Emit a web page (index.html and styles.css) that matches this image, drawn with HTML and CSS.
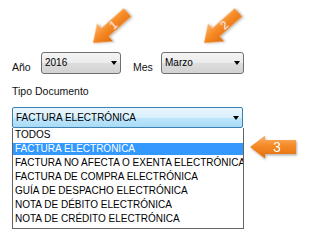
FILE: index.html
```html
<!DOCTYPE html>
<html lang="es">
<head>
<meta charset="utf-8">
<link rel="stylesheet" href="styles.css">
</head>
<body>
<div class="form">
  <div class="row">
    <span class="label label-ano">Año</span>
    <div class="combo combo-year"><span class="value">2016</span><span class="caret"></span></div>
    <span class="label label-mes">Mes</span>
    <div class="combo combo-month"><span class="value">Marzo</span><span class="caret"></span></div>
  </div>
  <div class="label label-tipo">Tipo Documento</div>
  <div class="combo combo-doc"><span class="value">FACTURA ELECTRÓNICA</span><span class="caret"></span></div>
  <ul class="list">
    <li>TODOS</li>
    <li class="selected">FACTURA ELECTRÓNICA</li>
    <li>FACTURA NO AFECTA O EXENTA ELECTRÓNICA</li>
    <li>FACTURA DE COMPRA ELECTRÓNICA</li>
    <li>GUÍA DE DESPACHO ELECTRÓNICA</li>
    <li>NOTA DE DÉBITO ELECTRÓNICA</li>
    <li>NOTA DE CRÉDITO ELECTRÓNICA</li>
  </ul>
</div>
<svg class="annotations" width="301" height="232" viewBox="0 0 301 232">
  <defs>
    <linearGradient id="og" x1="0" y1="-12" x2="0" y2="12" gradientUnits="userSpaceOnUse">
      <stop offset="0" stop-color="#fbb56f"/>
      <stop offset="0.45" stop-color="#f68a26"/>
      <stop offset="1" stop-color="#e06d0e"/>
    </linearGradient>
    <filter id="sh" x="-20%" y="-20%" width="150%" height="150%">
      <feDropShadow dx="1" dy="1.5" stdDeviation="1" flood-color="#000" flood-opacity="0.3"/>
    </filter>
  </defs>
  <g transform="translate(93,43) rotate(-41.7)" filter="url(#sh)">
    <path d="M0,0 L16,-12 L16,-5.5 L46,-5.5 L46,5.5 L16,5.5 L16,12 Z" fill="url(#og)"/>
    <text x="27" y="4" class="num num-small">1</text>
  </g>
  <g transform="translate(204,43) rotate(-41.7)" filter="url(#sh)">
    <path d="M0,0 L16,-12 L16,-5.5 L46,-5.5 L46,5.5 L16,5.5 L16,12 Z" fill="url(#og)"/>
    <text x="27" y="4" class="num num-small">2</text>
  </g>
  <g transform="translate(250,147)" filter="url(#sh)">
    <path d="M0,0 L15,-11.5 L15,-7 L46,-7 L46,7 L15,7 L15,11.5 Z" fill="url(#og)"/>
    <text x="27" y="5" class="num">3</text>
  </g>
</svg>
</body>
</html>
```
FILE: styles.css
```css
html, body {
  margin: 0;
  padding: 0;
  background: #ffffff;
}
body {
  width: 301px;
  height: 232px;
  position: relative;
  overflow: hidden;
  font-family: "Liberation Sans", Arial, sans-serif;
  color: #000;
}
.form {
  padding: 52px 0 0 12px;
}
.row {
  display: flex;
  align-items: flex-end;
  height: 22px;
}
.label {
  font-size: 10.5px;
  line-height: 14px;
  color: #111;
}
.label-ano {
  width: 29px;
}
.label-mes {
  margin-left: 12px;
  width: 28px;
}
.label-tipo {
  margin-top: 10px;
}
.combo {
  box-sizing: border-box;
  display: flex;
  align-items: center;
  justify-content: space-between;
  border: 1px solid #707070;
  border-radius: 3px;
  padding: 0 3px 0 3px;
  background: linear-gradient(to bottom, #f4f4f4 0%, #ebebeb 50%, #dddddd 51%, #d2d2d2 100%);
  font-size: 10px;
}
.combo-year {
  width: 80px;
  height: 22px;
}
.combo-month {
  width: 83px;
  height: 22px;
}
.combo-doc {
  width: 231px;
  height: 21px;
  margin-top: 9px;
  border-color: #3c7fb1;
  border-radius: 2px;
  background: linear-gradient(to bottom, #eaf6fd 0%, #d9f0fc 50%, #bee6fd 51%, #a9dbf6 100%);
}
.value {
  line-height: 12px;
}
.caret {
  width: 0;
  height: 0;
  border-left: 3.5px solid transparent;
  border-right: 3.5px solid transparent;
  border-top: 4px solid #000;
}
.list {
  box-sizing: border-box;
  list-style: none;
  margin: 0;
  width: 232px;
  padding: 1px 0 3px 0;
  border: 1px solid #646464;
  border-top: none;
  display: flex;
  flex-direction: column;
  gap: 2px;
  font-size: 10px;
  background: #fff;
  overflow: hidden;
}
.list li {
  height: 12px;
  line-height: 12px;
  padding-left: 2px;
  white-space: nowrap;
}
.list li.selected {
  background: #3399ff;
  color: #fff;
}
.annotations {
  position: absolute;
  left: 0;
  top: 0;
  pointer-events: none;
}
.num {
  fill: #fff;
  font-family: "Liberation Sans", Arial, sans-serif;
  font-size: 14px;
  text-anchor: middle;
}
.num-small {
  font-size: 11px;
}
```
